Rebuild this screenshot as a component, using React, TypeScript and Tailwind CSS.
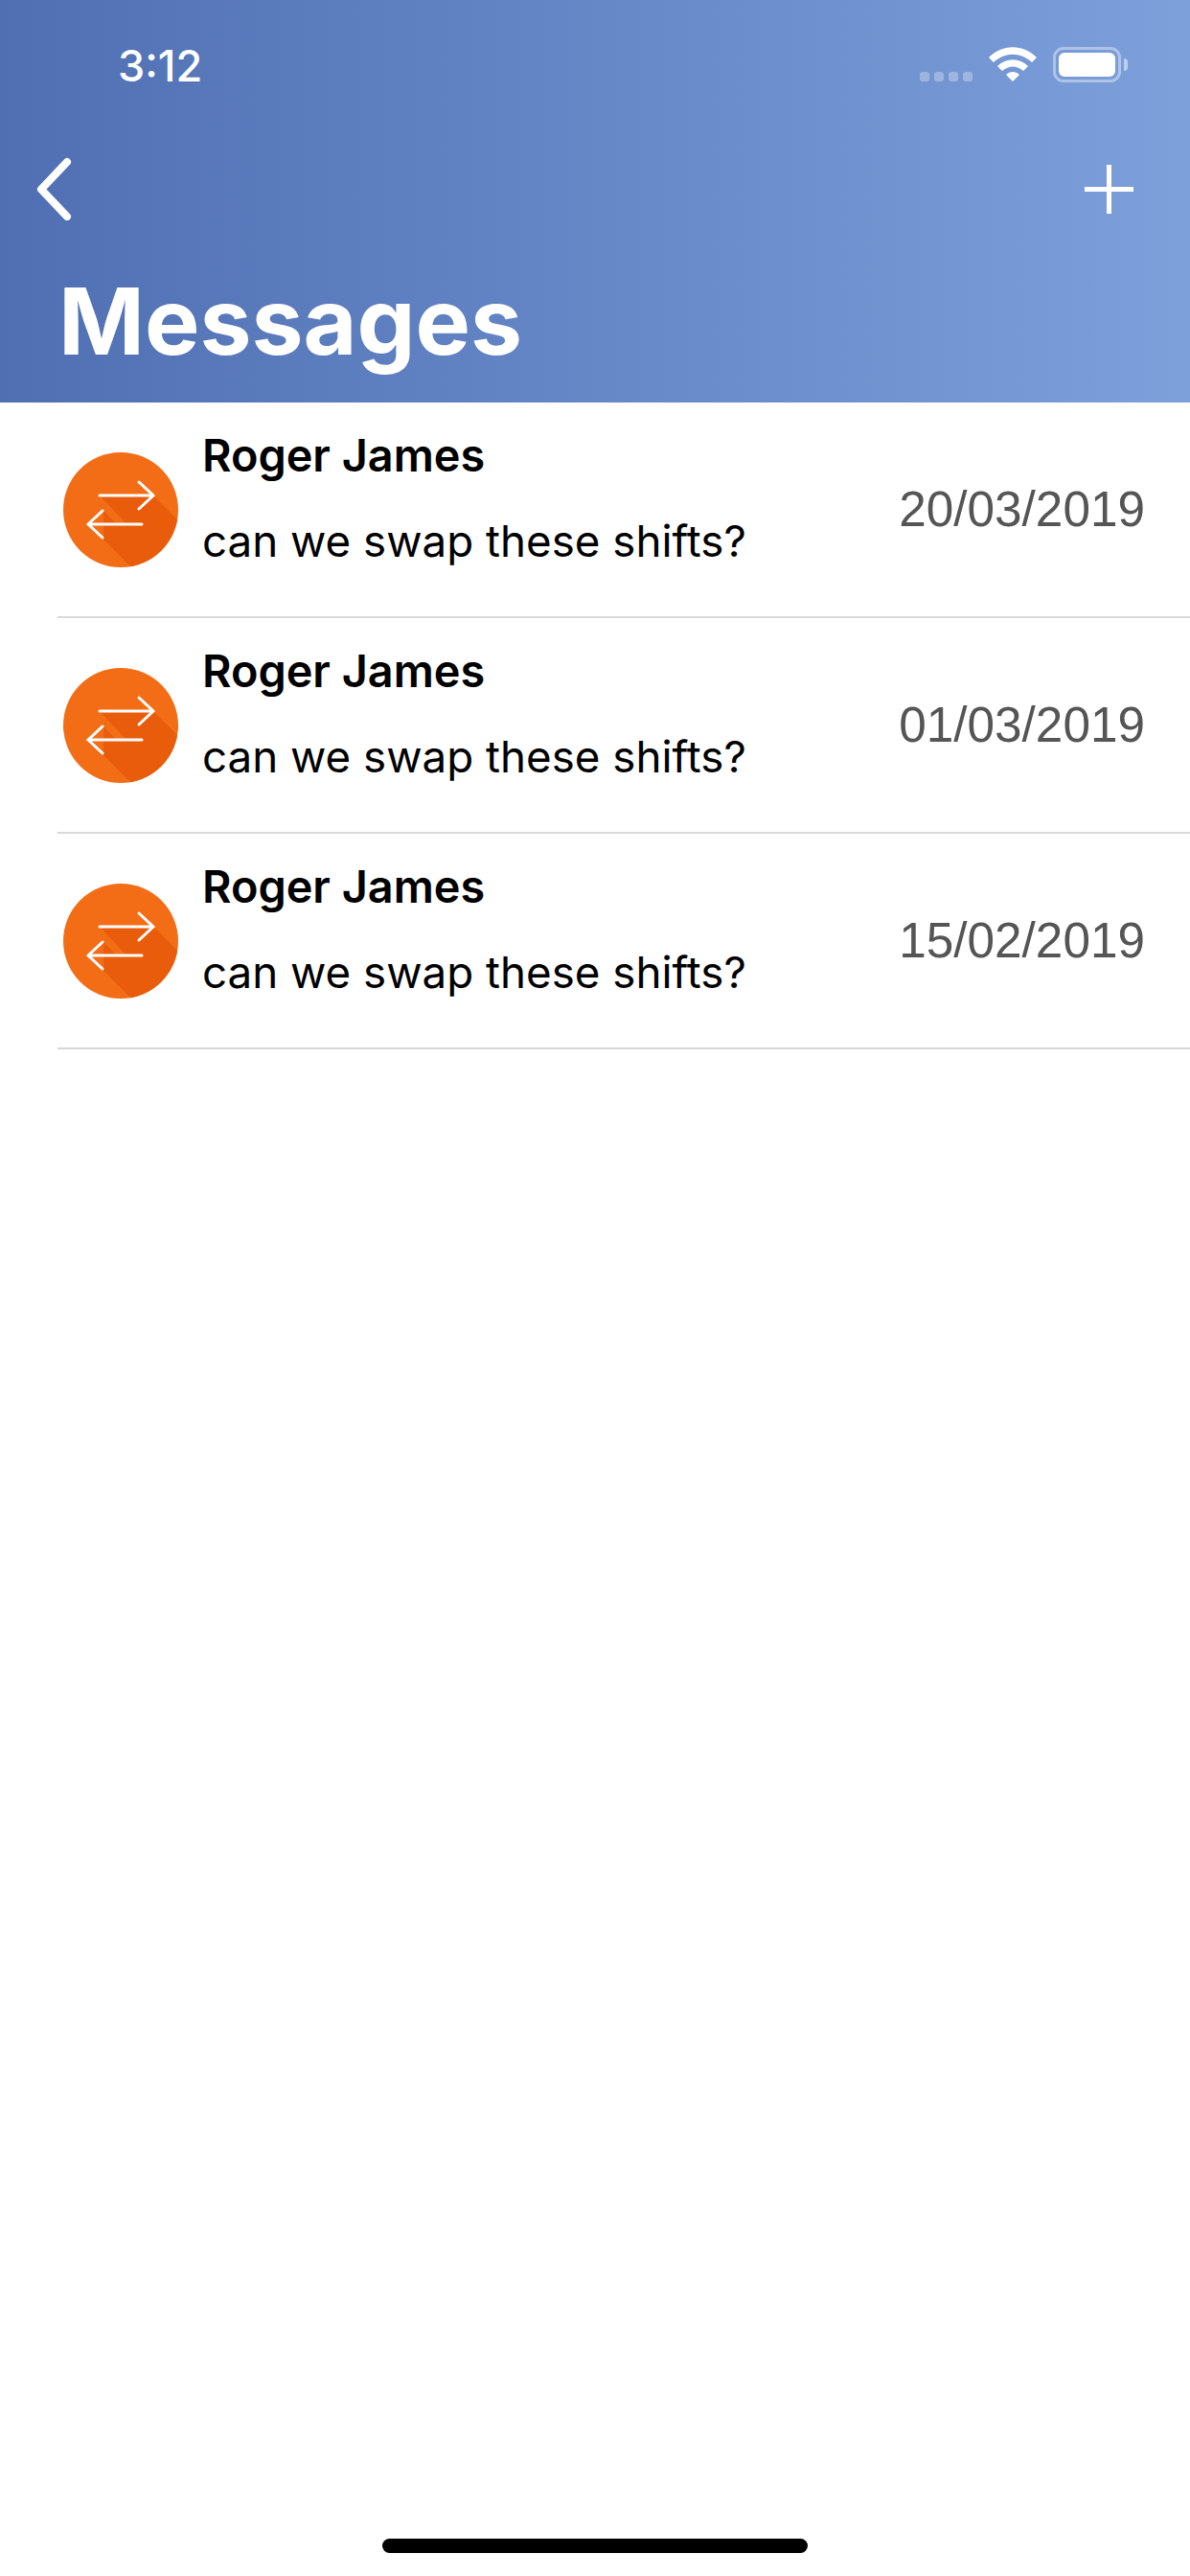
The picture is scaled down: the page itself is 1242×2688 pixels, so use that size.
import React from "react";

function SwapIcon() {
  return (
    <svg width="120" height="120" viewBox="0 0 120 120" className="shrink-0">
      <defs>
        <clipPath id="c">
          <circle cx="60" cy="60" r="60" />
        </clipPath>
      </defs>
      <circle cx="60" cy="60" r="60" fill="#F36D17" />
      <g clipPath="url(#c)">
        <polygon points="38,45 94,45 130,81 130,130 81,130 42,91 42,61 56,75 66,75" fill="#E85C0B" />
      </g>
      <g stroke="#fff" strokeWidth="3" fill="none" strokeLinecap="round">
        <path d="M38 45H94M79 31L94 45L79 59" />
        <path d="M82 75H26M41 61L26 75L41 89" />
      </g>
    </svg>
  );
}

function Row({ date }: { date: string }) {
  return (
    <div className="h-[225px] pl-[60px]">
      <div className="flex h-full items-center border-b-2 border-[#d8d8da] pr-[47px]">
        <div className="ml-[6px] mt-[1px]">
          <SwapIcon />
        </div>
        <div className="mb-[22px] ml-[25px] flex-1 font-['Inter',sans-serif] text-black">
          <div className="-mt-[2px] text-[46.800px] font-semibold leading-[55px]">Roger James</div>
          <div className="mt-[34px] text-[45.700px] font-normal leading-[55px]">can we swap these shifts?</div>
        </div>
        <div className="font-['Liberation_Sans',sans-serif] text-[51.300px] leading-[60px] text-[#555555]">{date}</div>
      </div>
    </div>
  );
}

export default function App() {
  return (
    <div className="relative flex h-[2688px] w-[1242px] flex-col overflow-hidden bg-white">
      <header className="h-[420px] shrink-0 bg-gradient-to-r from-[#4F6FB2] to-[#7DA0DB] text-white">
        <div className="flex h-[135px] items-start justify-between pl-[123px] pr-[65px] pt-[41px]">
          <span className="font-['Inter',sans-serif] text-[45px] font-medium leading-[55px]">3:12</span>
          <div className="-mt-[3px] flex items-start pt-[11px]">
            <div className="mt-[26px] flex gap-[5px] opacity-30">
              <i className="h-[10px] w-[10px] rounded-[3px] bg-white" />
              <i className="h-[10px] w-[10px] rounded-[3px] bg-white" />
              <i className="h-[10px] w-[10px] rounded-[3px] bg-white" />
              <i className="h-[10px] w-[10px] rounded-[3px] bg-white" />
            </div>
            <svg width="50" height="36" viewBox="0 0 50 36" className="ml-[17px]" fill="#fff">
              <path d="M0 11C14-3.500 36-3.500 50 11L45 16C33 5 17 5 5 16Z" />
              <path d="M9 20C18 11 32 11 41 20L36 25C29 19 21 19 14 25Z" />
              <path d="M18 29C22 25 28 25 32 29L25 36Z" />
            </svg>
            <div className="ml-[17px] flex items-center">
              <div className="h-[37px] w-[71px] rounded-[11px] border-[3px] border-white/40 p-[3px]">
                <div className="h-full w-full rounded-[6px] bg-white" />
              </div>
              <div className="ml-[3px] h-[13px] w-[4px] rounded-r-full bg-white/50" />
            </div>
          </div>
        </div>
        <div className="mt-[17px] flex h-[90px] items-center justify-between pl-[37px] pr-[58px]">
          <svg width="40" height="66" viewBox="0 0 40 66" fill="none" stroke="#fff" strokeWidth="8" strokeLinecap="round" strokeLinejoin="round">
            <path d="M33 5L6 33.500L33 62" />
          </svg>
          <svg width="53" height="53" viewBox="0 0 53 53" fill="none" stroke="#fff" strokeWidth="5">
            <path d="M26.500 1V52M1 26.500H52" />
          </svg>
        </div>
        <h1 className="mt-[33px] pl-[61px] font-['Inter',sans-serif] text-[96.500px] font-bold leading-[120px]">Messages</h1>
      </header>
      <main>
        <Row date="20/03/2019" />
        <Row date="01/03/2019" />
        <Row date="15/02/2019" />
      </main>
      <div className="absolute bottom-[24px] left-[399px] h-[15px] w-[444px] rounded-full bg-black" />
    </div>
  );
}
